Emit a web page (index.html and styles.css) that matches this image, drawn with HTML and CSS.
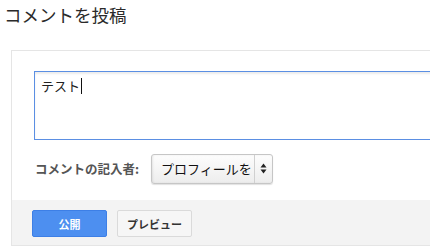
FILE: index.html
```html
<!DOCTYPE html>
<html lang="ja">
<head>
<meta charset="utf-8">
<link rel="stylesheet" href="styles.css">
</head>
<body>
<h1 class="title">コメントを投稿</h1>
<div class="panel">
  <div class="panel-body">
    <div class="textbox">テスト<span class="caret"></span></div>
    <div class="author-row">
      <span class="author-label">コメントの記入者:</span>
      <div class="select">
        <span class="select-text">プロフィールを</span>
        <span class="select-arrows">
          <svg width="7" height="11" viewBox="0 0 7 11"><path d="M3.5 0.5 L6.5 4.5 L0.5 4.5 Z" fill="#222"/><path d="M0.5 6.5 L6.5 6.5 L3.5 10.5 Z" fill="#222"/></svg>
        </span>
      </div>
    </div>
  </div>
  <div class="panel-footer">
    <button class="btn btn-primary">公開</button>
    <button class="btn btn-default">プレビュー</button>
  </div>
</div>
</body>
</html>
```
FILE: styles.css
```css
html, body {
  margin: 0;
  padding: 0;
  overflow: hidden;
  background: #fff;
}
body {
  width: 430px;
  height: 246px;
  font-family: "Noto Sans CJK JP", "Noto Sans", sans-serif;
  color: #222;
}
.title {
  margin: 0;
  padding: 3px 0 0 4px;
  height: 50px;
  box-sizing: border-box;
  font-size: 17.5px;
  line-height: 24px;
  font-weight: normal;
  color: #2a2a2a;
}
.panel {
  margin-left: 11px;
  width: 419px;
  height: 196px;
  box-sizing: border-box;
  border: 1px solid #e5e5e5;
  border-right: none;
  display: flex;
  flex-direction: column;
  overflow: hidden;
}
.panel-body {
  padding: 20px 0 0 22px;
  height: 149px;
  flex: none;
  box-sizing: border-box;
}
.textbox {
  width: 420px;
  height: 69px;
  box-sizing: border-box;
  border: 1px solid #5b8fe3;
  border-right: none;
  box-shadow: inset 0 2px 2px rgba(0,0,0,0.08);
  padding: 4px 6px;
  font-size: 13px;
  line-height: 20px;
  color: #222;
}
.caret {
  display: inline-block;
  width: 1px;
  height: 16px;
  background: #111;
  vertical-align: -3px;
  margin-left: 1px;
}
.author-row {
  display: flex;
  align-items: center;
  margin-top: 13px;
  height: 31px;
}
.author-label {
  font-size: 12.5px;
  font-weight: bold;
  color: #555;
  width: 116px;
  padding-left: 1px;
}
.select {
  display: flex;
  align-items: stretch;
  width: 122px;
  height: 30px;
  box-sizing: border-box;
  border: 1px solid #c6c6c6;
  border-radius: 3px;
  background: linear-gradient(#fdfdfd, #ededed);
  box-shadow: 0 1px 1px rgba(0,0,0,0.12), inset 1px 0 2px rgba(0,0,0,0.08);
}
.select-text {
  flex: 1;
  display: flex;
  align-items: center;
  padding-left: 9px;
  font-size: 13px;
  color: #111;
}
.select-arrows {
  width: 17px;
  border-left: 1px solid #d0d0d0;
  display: flex;
  align-items: center;
  justify-content: center;
}
.panel-footer {
  flex: 1;
  background: #f3f3f3;
  padding: 10px 0 0 20px;
  display: flex;
  align-items: flex-start;
  gap: 10px;
}
.btn {
  height: 27px;
  width: 75px;
  box-sizing: border-box;
  border-radius: 2px;
  font-family: "Noto Sans CJK JP", sans-serif;
  font-size: 11px;
  font-weight: bold;
  padding: 0;
  margin: 0;
}
.btn-primary {
  background: #4d8ff0;
  border: 1px solid #3d7fe6;
  color: #fff;
}
.btn-default {
  background: #f6f6f6;
  border: 1px solid #dadada;
  color: #333;
}
```
